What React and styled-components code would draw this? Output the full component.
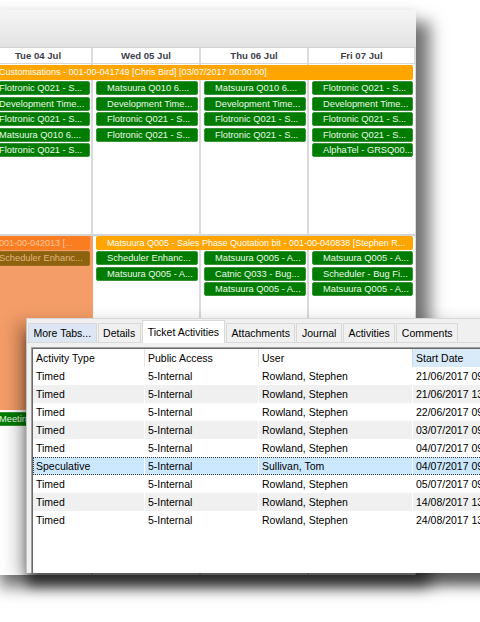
import React from 'react'
import styled, { createGlobalStyle } from 'styled-components'

const COLS = '108px 108px 108px 107px'

const laneOne = [
	['Flotronic Q021 - S...', 'Development Time...', 'Flotronic Q021 - S...', 'Matsuura Q010 6....', 'Flotronic Q021 - S...'],
	['Matsuura Q010 6....', 'Development Time...', 'Flotronic Q021 - S...', 'Flotronic Q021 - S...'],
	['Matsuura Q010 6....', 'Development Time...', 'Flotronic Q021 - S...', 'Flotronic Q021 - S...'],
	['Flotronic Q021 - S...', 'Development Time...', 'Flotronic Q021 - S...', 'Flotronic Q021 - S...', 'AlphaTel - GRSQ00...'],
]

const laneTwo = [
	['Scheduler Enhanc...', 'Matsuura Q005 - A...'],
	['Matsuura Q005 - A...', 'Catnic Q033 - Bug...', 'Matsuura Q005 - A...'],
	['Matsuura Q005 - A...', 'Scheduler - Bug Fi...', 'Matsuura Q005 - A...'],
]

const activities = [
	['Timed', '5-Internal', 'Rowland, Stephen', '21/06/2017 09:00:00'],
	['Timed', '5-Internal', 'Rowland, Stephen', '21/06/2017 13:00:00'],
	['Timed', '5-Internal', 'Rowland, Stephen', '22/06/2017 09:00:00'],
	['Timed', '5-Internal', 'Rowland, Stephen', '03/07/2017 09:00:00'],
	['Timed', '5-Internal', 'Rowland, Stephen', '04/07/2017 09:00:00'],
	['Speculative', '5-Internal', 'Sullivan, Tom', '04/07/2017 09:00:00'],
	['Timed', '5-Internal', 'Rowland, Stephen', '05/07/2017 09:00:00'],
	['Timed', '5-Internal', 'Rowland, Stephen', '14/08/2017 13:00:00'],
	['Timed', '5-Internal', 'Rowland, Stephen', '24/08/2017 13:00:00'],
]

const tabs = ['More Tabs...', 'Details', 'Ticket Activities', 'Attachments', 'Journal', 'Activities', 'Comments']

const App = () => (
	<Stage>
		<GlobalStyle />
		<Calendar>
			<Toolbar />
			<DayHeader>
				{['Tue 04 Jul', 'Wed 05 Jul', 'Thu 06 Jul', 'Fri 07 Jul'].map(d => (
					<DayLabel key={d}>{d}</DayLabel>
				))}
			</DayHeader>

			<Lane $h={170} $divider>
				<Bar $cols="1 / -1" $top={1}>Customisations - 001-00-041749 [Chris Bird] [03/07/2017 00:00:00]</Bar>
				{laneOne.map((items, i) => (
					<Slot key={i} $col={i + 1}>
						{items.map((t, j) => <Item key={j}>{t}</Item>)}
					</Slot>
				))}
			</Lane>

			<Lane $h={339}>
				<Slot $col={1} $span>
					<Selection>
						<DarkBar>001-00-042013 [...</DarkBar>
						<DimItem>Scheduler Enhanc...</DimItem>
					</Selection>
					<Item>Meeting</Item>
				</Slot>
				<Bar $cols="2 / -1" $top={0}>Matsuura Q005 - Sales Phase Quotation bit - 001-00-040838 [Stephen R...</Bar>
				{laneTwo.map((items, i) => (
					<Slot key={i} $col={i + 2}>
						{items.map((t, j) => <Item key={j}>{t}</Item>)}
					</Slot>
				))}
			</Lane>
		</Calendar>

		<Panel>
			<TabStrip>
				{tabs.map(t => (
					<Tab key={t} $active={t === 'Ticket Activities'} $more={t === 'More Tabs...'}>{t}</Tab>
				))}
			</TabStrip>
			<PanelBody>
				<ListView>
					<HeaderRow>
						<HeadCell>Activity Type</HeadCell>
						<HeadCell>Public Access</HeadCell>
						<HeadCell>User</HeadCell>
						<HeadCell $sorted>Start Date</HeadCell>
					</HeaderRow>
					{activities.map((row, i) => (
						<Row key={i} $alt={i % 2 === 1} $selected={row[0] === 'Speculative'}>
							{row.map((v, j) => <Cell key={j}>{v}</Cell>)}
						</Row>
					))}
				</ListView>
			</PanelBody>
		</Panel>
	</Stage>
)

const GlobalStyle = createGlobalStyle`
	html, body {
		margin: 0;
		padding: 0;
		background: #ffffff;
	}

	#root {
		width: 480px;
		height: 622px;
		overflow: hidden;
	}
`

const Stage = styled.div`
	position: relative;
	width: 480px;
	height: 622px;
	padding-top: 10px;
	box-sizing: border-box;
	overflow: hidden;
	background: #ffffff;
`

const Calendar = styled.div`
	width: 431px;
	height: 565px;
	margin-left: -15px;
	display: flex;
	flex-direction: column;
	background: #ffffff;
	box-shadow: 14px 12px 15px rgba(0, 0, 0, 0.55), 0 -3px 8px rgba(0, 0, 0, 0.05);
	font-family: 'Liberation Sans', Arial, sans-serif;
`

const Toolbar = styled.div`
	height: 38px;
	flex: none;
	background: linear-gradient(#f6f6f6, #e2e2e2);
	border-bottom: 1px solid #d4d4d4;
	box-sizing: border-box;
`

const DayHeader = styled.div`
	display: grid;
	grid-template-columns: ${COLS};
	height: 16px;
	flex: none;
	border-bottom: 1px solid #d8d8d8;
	box-sizing: border-box;
`

const DayLabel = styled.div`
	border-right: 2px solid #dcdcdc;
	font-size: 9.6px;
	font-weight: bold;
	line-height: 15px;
	text-align: center;
	color: #3e3e4c;
`

const Lane = styled.div`
	display: grid;
	grid-template-columns: ${COLS};
	grid-template-rows: auto 1fr;
	align-content: start;
	height: ${props => props.$h}px;
	flex: none;
	overflow: hidden;
	background-image: linear-gradient(to right, transparent 106px, #dadada 106px);
	background-size: 108px 100%;
	border-bottom: ${props => (props.$divider ? '2px solid #d4d4d4' : 'none')};
`

const Bar = styled.div`
	grid-column: ${props => props.$cols};
	grid-row: 1;
	height: ${props => (props.$top ? 15 : 14)}px;
	margin: ${props => props.$top}px 3px 1px;
	padding-left: 11px;
	border-radius: 2px;
	background: #ffa500;
	color: #ffffff;
	font-size: 9px;
	line-height: ${props => (props.$top ? 15 : 14)}px;
	white-space: nowrap;
	overflow: hidden;
`

const Slot = styled.div`
	grid-column: ${props => props.$col};
	grid-row: ${props => (props.$span ? '1 / 3' : '2')};
	display: flex;
	flex-direction: column;
	gap: 1.5px;
	padding: 0 3px;
	min-width: 0;
`

const Item = styled.div`
	height: 14px;
	flex: none;
	padding-left: 10px;
	box-sizing: border-box;
	border: 1px solid #3a923a;
	border-radius: 2px;
	background: #007d00;
	color: #eef8ee;
	font-size: 9.3px;
	line-height: 12px;
	white-space: nowrap;
	overflow: hidden;
`

const Selection = styled.div`
	height: 174px;
	flex: none;
	margin: 0 -3px;
	padding: 0 3px;
	display: flex;
	flex-direction: column;
	gap: 1px;
	background: #f49d68;
`

const DarkBar = styled.div`
	height: 14px;
	padding-left: 11px;
	border-radius: 2px;
	background: #fa7d22;
	color: #ffc79c;
	font-size: 9px;
	line-height: 14px;
	white-space: nowrap;
	overflow: hidden;
`

const DimItem = styled(Item)`
	height: 15px;
	border-color: #9a6a1c;
	background: #8c620f;
	color: #e2b67c;
	line-height: 13px;
`

const Panel = styled.div`
	position: absolute;
	left: 26px;
	top: 318px;
	width: 500px;
	height: 255px;
	box-sizing: border-box;
	display: flex;
	flex-direction: column;
	background: #f0f0f0;
	border-left: 1px solid #c4c4c4;
	border-top: 1px solid #d6d6d6;
	box-shadow: 0 14px 12px -1px rgba(0, 0, 0, 0.62), -12px 2px 14px rgba(0, 0, 0, 0.16);
	font-family: 'Liberation Sans', Arial, sans-serif;
	font-size: 10.5px;
	color: #000000;
`

const TabStrip = styled.div`
	display: flex;
	align-items: flex-end;
	gap: 1px;
	height: 24px;
	flex: none;
	padding-left: 1px;
	border-bottom: 1px solid #d9d9d9;
	box-sizing: border-box;
`

const Tab = styled.div`
	position: relative;
	display: flex;
	align-items: center;
	height: ${props => (props.$active ? 23 : 19)}px;
	margin-bottom: ${props => (props.$active ? -1 : 0)}px;
	padding: 0 ${props => (props.$active ? 5 : 4.5)}px;
	box-sizing: border-box;
	border: 1px solid #d9d9d9;
	border-bottom: none;
	background: ${props => (props.$active ? '#ffffff' : props.$more ? '#dce7f3' : '#f0f0f0')};
	white-space: nowrap;
`

const PanelBody = styled.div`
	flex: 1;
	display: flex;
	padding: 4px 0 0 4px;
	min-height: 0;
`

const ListView = styled.div`
	flex: 1;
	background: #ffffff;
	border-top: 1px solid #a0a0a0;
	border-left: 1px solid #a0a0a0;
	box-shadow: inset 1px 1px 0 #696969;
	padding: 1px 0 0 1px;
	overflow: hidden;
`

const HeaderRow = styled.div`
	display: grid;
	grid-template-columns: 112px 114px 154px 200px;
	height: 18px;
`

const HeadCell = styled.div`
	padding-left: 3px;
	line-height: 18px;
	border-right: 1px solid #e5e5e5;
	background: ${props => (props.$sorted ? '#d9ebf9' : '#ffffff')};
	border-left: ${props => (props.$sorted ? '1px solid #c8dbee' : 'none')};
	margin-left: ${props => (props.$sorted ? -1 : 0)}px;
	white-space: nowrap;
`

const Row = styled.div`
	display: grid;
	grid-template-columns: 112px 114px 154px 200px;
	height: 18px;
	background: ${props => (props.$selected ? '#cce8ff' : props.$alt ? '#f0f0f0' : '#ffffff')};
	outline: ${props => (props.$selected ? '1px dotted #3c3c3c' : 'none')};
	outline-offset: -1px;
`

const Cell = styled.div`
	padding-left: 3px;
	line-height: 18px;
	border-right: 1px solid #ffffff;
	white-space: nowrap;
	overflow: hidden;
`

export default App
